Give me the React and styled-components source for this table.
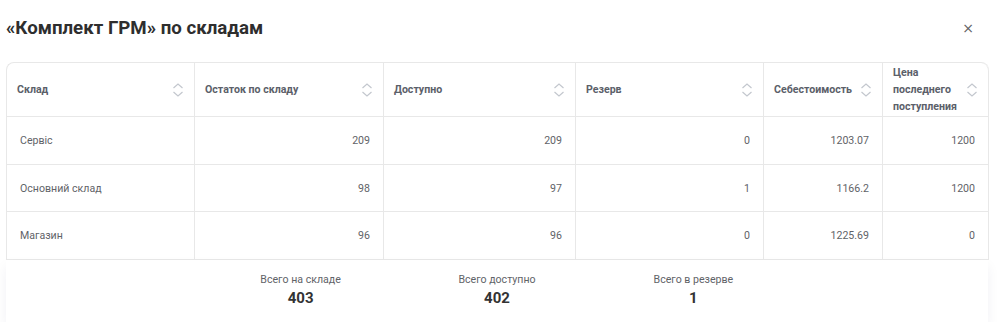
import React from "react";
import styled, { createGlobalStyle } from "styled-components";

const GlobalStyle = createGlobalStyle`
  body {
    margin: 0;
    background: #fff;
    font-family: Roboto, "Noto Sans", sans-serif;
  }
`;

const Page = styled.div`
  padding: 0 12px 0 6px;
`;

const Header = styled.div`
  display: flex;
  justify-content: space-between;
  align-items: center;
  height: 62px;
  padding-bottom: 6px;
  box-sizing: border-box;
`;

const Title = styled.h2`
  margin: 0;
  font-size: 18.7px;
  font-weight: 700;
  color: #2e2e2e;
  line-height: 22px;
`;

const CloseButton = styled.button`
  border: none;
  background: none;
  padding: 0;
  margin-right: 14px;
  color: #606266;
  font-size: 14px;
  line-height: 14px;
  cursor: pointer;
  font-family: "DejaVu Sans", sans-serif;
`;

const Table = styled.table`
  width: 982px;
  table-layout: fixed;
  border-collapse: separate;
  border-spacing: 0;
  border-top: 1px solid #e8e8e8;
  border-left: 1px solid #e8e8e8;
  border-radius: 8px 8px 0 0;
`;

const Th = styled.th`
  height: 53px;
  padding: 0 10px 0 10px;
  border-right: 1px solid #e8e8e8;
  border-bottom: 1px solid #e8e8e8;
  font-size: 10.6px;
  font-weight: 700;
  color: #5b6069;
  text-align: left;
  line-height: 17px;
  &:last-child { border-top-right-radius: 8px; }
  &:first-child { border-top-left-radius: 8px; }
`;

const ThInner = styled.div`
  display: flex;
  align-items: center;
  justify-content: space-between;
  gap: 6px;
`;

const Td = styled.td`
  height: 46.7px;
  padding: 0 13px;
  border-right: 1px solid #e8e8e8;
  border-bottom: 1px solid #e8e8e8;
  font-size: 10.6px;
  color: #5f6368;
  text-align: ${(p) => (p.$num ? "right" : "left")};
`;

const Footer = styled.div`
  width: 982px;
  height: 62px;
  display: grid;
  grid-template-columns: repeat(5, 1fr);
  align-items: center;
  background: #fff;
  box-shadow: 0 6px 12px rgba(30, 40, 90, 0.06);
`;

const Total = styled.div`
  display: flex;
  flex-direction: column;
  align-items: center;
  margin-top: -2px;
`;

const TotalLabel = styled.span`
  font-size: 10.6px;
  color: #5f6368;
  line-height: 16px;
`;

const TotalValue = styled.span`
  font-size: 15px;
  font-weight: 700;
  color: #333;
  line-height: 20px;
`;

const SortIcon = () => (
  <svg width="12" height="16" viewBox="0 0 12 16" fill="none" stroke="#c3c7ce" strokeWidth="1.2" style={{ flexShrink: 0 }}>
    <polyline points="1.5,6 6,2 10.5,6" />
    <polyline points="1.5,10 6,14 10.5,10" />
  </svg>
);

const columns = [
  { title: "Склад", width: 188 },
  { title: "Остаток по складу", width: 189 },
  { title: "Доступно", width: 192 },
  { title: "Резерв", width: 188 },
  { title: "Себестоимость", width: 119 },
  { title: "Цена последнего поступления", width: 106 },
];

const rows = [
  ["Сервіс", 209, 209, 0, "1203.07", 1200],
  ["Основний склад", 98, 97, 1, "1166.2", 1200],
  ["Магазин", 96, 96, 0, "1225.69", 0],
];

export default function App() {
  return (
    <Page>
      <GlobalStyle />
      <Header>
        <Title>«Комплект ГРМ» по складам</Title>
        <CloseButton>×</CloseButton>
      </Header>
      <Table>
        <colgroup>
          {columns.map((c) => (
            <col key={c.title} style={{ width: c.width }} />
          ))}
        </colgroup>
        <thead>
          <tr>
            {columns.map((c) => (
              <Th key={c.title}>
                <ThInner>
                  <span>{c.title}</span>
                  <SortIcon />
                </ThInner>
              </Th>
            ))}
          </tr>
        </thead>
        <tbody>
          {rows.map((r) => (
            <tr key={r[0]}>
              {r.map((v, i) => (
                <Td key={i} $num={i > 0}>{v}</Td>
              ))}
            </tr>
          ))}
        </tbody>
      </Table>
      <Footer>
        <span />
        <Total>
          <TotalLabel>Всего на складе</TotalLabel>
          <TotalValue>403</TotalValue>
        </Total>
        <Total>
          <TotalLabel>Всего доступно</TotalLabel>
          <TotalValue>402</TotalValue>
        </Total>
        <Total>
          <TotalLabel>Всего в резерве</TotalLabel>
          <TotalValue>1</TotalValue>
        </Total>
      </Footer>
    </Page>
  );
}
